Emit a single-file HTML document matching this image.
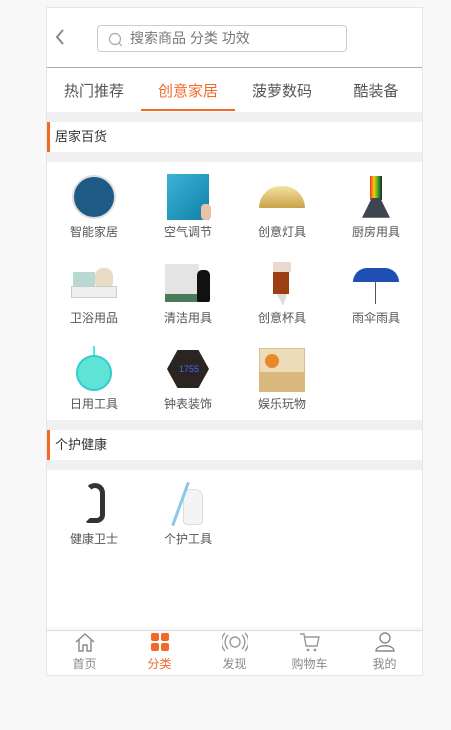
<!DOCTYPE html>
<html><head><meta charset="utf-8"><style>
*{margin:0;padding:0;box-sizing:border-box}
body{width:451px;height:730px;background:#f8f8f8;font-family:"Liberation Sans","Noto Sans CJK SC",sans-serif;position:relative;overflow:hidden}
#c{position:absolute;left:46px;top:7px;width:377px;height:669px;background:#fff;border:1px solid #e6e6e6}
.abs{position:absolute}
.tab{position:absolute;top:72px;font-size:15px;color:#555;width:94px;text-align:center}
.gap{position:absolute;left:0;width:375px;background:#f0f0f0}
.st{position:absolute;left:0;width:375px;height:30px;border-left:3px solid #f26a2a;font-size:13px;color:#333;line-height:30px;padding-left:5px}
.it{position:absolute;width:94px;text-align:center;font-size:12px;color:#555}
.it .im{width:46px;height:46px;margin:0 auto 3px;position:relative}
.nav{position:absolute;top:624px;width:75px;text-align:center;font-size:12px;color:#888}
</style></head><body>
<div id="c">
<svg class="abs" style="left:6px;top:20px" width="14" height="18"><path d="M10 2 L4 9 L10 16" stroke="#888" stroke-width="2" fill="none"/></svg>
<div class="abs" style="left:50px;top:17px;width:250px;height:27px;border:1px solid #ccc;border-radius:4px;font-size:14px;color:#777;line-height:25px;padding-left:32px">搜索商品 分类 功效
<svg class="abs" style="left:10px;top:6px" width="16" height="16"><circle cx="7" cy="7" r="5.5" stroke="#aaa" stroke-width="1.2" fill="none"/><path d="M11 11 L14 14" stroke="#aaa" stroke-width="1.2"/></svg></div>
<div class="abs" style="left:0;top:59px;width:375px;height:1px;background:#aaa"></div>
<div class="tab" style="left:0">热门推荐</div>
<div class="tab" style="left:94px;color:#f26a2a">创意家居</div>
<div class="tab" style="left:188px">菠萝数码</div>
<div class="tab" style="left:282px">酷装备</div>
<div class="abs" style="left:94px;top:101px;width:94px;height:2px;background:#f26a2a"></div>
<div class="gap" style="top:104px;height:10px"></div>
<div class="st" style="top:114px">居家百货</div>
<div class="gap" style="top:144px;height:10px"></div>

<div class="it" style="left:0;top:166px"><div class="im"><div class="abs" style="left:1px;top:1px;width:44px;height:44px;border-radius:50%;background:#1d5a86;border:2px solid #ddd"></div></div>智能家居</div>
<div class="it" style="left:94px;top:166px"><div class="im"><div class="abs" style="left:2px;top:0;width:42px;height:46px;background:linear-gradient(135deg,#3bb4d6,#137fa8)"></div><div class="abs" style="left:36px;top:30px;width:10px;height:16px;background:#e8c3a8;border-radius:4px"></div></div>空气调节</div>
<div class="it" style="left:188px;top:166px"><div class="im"><div class="abs" style="left:0;top:12px;width:46px;height:22px;border-radius:23px 23px 0 0;background:linear-gradient(#f3e3a0,#c9a24a)"></div></div>创意灯具</div>
<div class="it" style="left:282px;top:166px"><div class="im"><div class="abs" style="left:17px;top:2px;width:12px;height:24px;background:linear-gradient(90deg,#e33,#fc0,#3a3,#222)"></div><div class="abs" style="left:9px;top:24px;width:28px;height:22px;background:#3d4550;clip-path:polygon(35% 0,65% 0,100% 90%,0 90%)"></div></div>厨房用具</div>

<div class="it" style="left:0;top:252px"><div class="im"><div class="abs" style="left:2px;top:12px;width:22px;height:20px;background:#b8d8d2"></div><div class="abs" style="left:24px;top:8px;width:18px;height:22px;background:#e8dcc4;border-radius:8px"></div><div class="abs" style="left:0;top:26px;width:46px;height:12px;background:#eee;border:1px solid #ccc"></div></div>卫浴用品</div>
<div class="it" style="left:94px;top:252px"><div class="im"><div class="abs" style="left:0;top:4px;width:34px;height:34px;background:#e4e4e4"></div><div class="abs" style="left:0;top:34px;width:34px;height:8px;background:#4a7a5a"></div><div class="abs" style="left:32px;top:10px;width:13px;height:32px;background:#111;border-radius:5px 5px 2px 2px"></div></div>清洁用具</div>
<div class="it" style="left:188px;top:252px"><div class="im"><div class="abs" style="left:14px;top:2px;width:18px;height:10px;background:#e9d9cf"></div><div class="abs" style="left:14px;top:12px;width:16px;height:22px;background:#9b3f12"></div><div class="abs" style="left:18px;top:34px;width:10px;height:12px;background:#ddd;clip-path:polygon(0 0,100% 0,60% 100%)"></div></div>创意杯具</div>
<div class="it" style="left:282px;top:252px"><div class="im"><div class="abs" style="left:0;top:8px;width:46px;height:14px;border-radius:23px 23px 0 0;background:#1f4fb5"></div><div class="abs" style="left:22px;top:20px;width:1px;height:24px;background:#555"></div></div>雨伞雨具</div>

<div class="it" style="left:0;top:338px"><div class="im"><div class="abs" style="left:22px;top:0;width:2px;height:10px;background:#4ed"></div><div class="abs" style="left:5px;top:9px;width:36px;height:36px;border-radius:50%;background:#5fe3d6;border:2px solid #3cc"></div></div>日用工具</div>
<div class="it" style="left:94px;top:338px"><div class="im"><div class="abs" style="left:2px;top:4px;width:42px;height:38px;background:#2a2520;clip-path:polygon(25% 0,75% 0,100% 50%,75% 100%,25% 100%,0 50%)"></div><div class="abs" style="left:14px;top:18px;font-size:9px;color:#46f">1755</div></div>钟表装饰</div>
<div class="it" style="left:188px;top:338px"><div class="im"><div class="abs" style="left:0;top:2px;width:46px;height:44px;background:#ecdcb8;border:1px solid #d8c090"></div><div class="abs" style="left:6px;top:8px;width:14px;height:14px;border-radius:50%;background:#e88a2a"></div><div class="abs" style="left:0;top:26px;width:46px;height:20px;background:#d9b87e"></div></div>娱乐玩物</div>

<div class="gap" style="top:412px;height:10px"></div>
<div class="st" style="top:422px">个护健康</div>
<div class="gap" style="top:452px;height:10px"></div>
<div class="it" style="left:0;top:473px"><div class="im"><div class="abs" style="left:14px;top:2px;width:20px;height:40px;border:5px solid #333;border-radius:12px 12px 10px 4px;border-left-color:transparent"></div></div>健康卫士</div>
<div class="it" style="left:94px;top:473px"><div class="im"><div class="abs" style="left:18px;top:8px;width:20px;height:36px;background:#f4f4f4;border:1px solid #ddd;border-radius:8px 8px 4px 4px"></div><div class="abs" style="left:14px;top:0;width:3px;height:46px;background:#8cc8e8;transform:rotate(20deg)"></div></div>个护工具</div>

<div class="abs" style="left:0;top:622px;width:375px;height:1px;background:#ddd;box-shadow:0 -1px 3px #ddd"></div>
<div class="nav" style="left:0"><svg width="22" height="20"><path d="M2 10 L11 2 L20 10 M5 8 V19 H9 V13 H13 V19 H17 V8" stroke="#888" stroke-width="1.4" fill="none"/></svg><br>首页</div>
<div class="nav" style="left:75px;color:#f26a2a"><svg width="22" height="20"><rect x="2" y="1" width="8" height="8" rx="2" fill="#f26a2a"/><rect x="12" y="1" width="8" height="8" rx="2" fill="#f26a2a"/><rect x="2" y="11" width="8" height="8" rx="2" fill="#f26a2a"/><rect x="12" y="11" width="8" height="8" rx="2" fill="#f26a2a"/></svg><br>分类</div>
<div class="nav" style="left:150px"><svg width="26" height="20"><circle cx="13" cy="10" r="5" stroke="#999" stroke-width="1.4" fill="none"/><path d="M6 3 A10 10 0 0 0 6 17 M20 3 A10 10 0 0 1 20 17 M3 1 A13 13 0 0 0 3 19 M23 1 A13 13 0 0 1 23 19" stroke="#999" stroke-width="1.4" fill="none"/></svg><br>发现</div>
<div class="nav" style="left:225px"><svg width="22" height="20"><path d="M1 2 H5 L7 14 H18 L20 5 H6" stroke="#999" stroke-width="1.4" fill="none"/><circle cx="9" cy="18" r="1.4" fill="#999"/><circle cx="16" cy="18" r="1.4" fill="#999"/></svg><br>购物车</div>
<div class="nav" style="left:300px"><svg width="22" height="20"><circle cx="11" cy="6" r="5" stroke="#888" stroke-width="1.4" fill="none"/><path d="M2 19 C2 12 20 12 20 19 Z" stroke="#888" stroke-width="1.4" fill="none"/></svg><br>我的</div>
</div>
</body></html>
